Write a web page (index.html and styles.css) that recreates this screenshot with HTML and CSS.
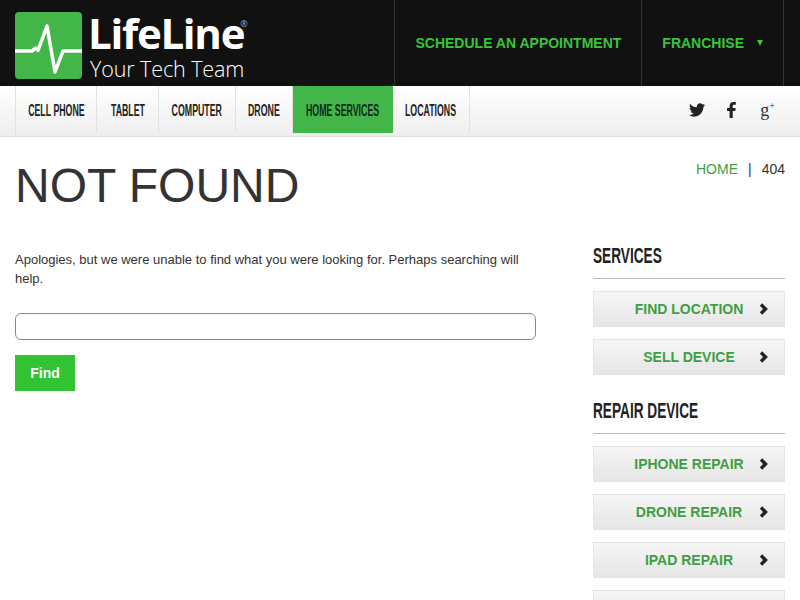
FILE: index.html
```html
<!DOCTYPE html>
<html lang="en">

<head>
    <meta charset="UTF-8">
    <meta name="viewport" content="width=device-width, initial-scale=1.0">
    <title>Not Found</title>
    <link rel="stylesheet" href="styles.css">
</head>

<body>
    <div class="page">
        <header class="top">
            <a class="logo" href="#">
                <svg class="logo-mark" width="67" height="67" viewBox="0 0 67 67">
                    <rect width="67" height="67" rx="4" fill="#43b649" />
                    <path d="M0 39 H17 L21 36 L23 38.500 L32 14 L40 60 L48 39 H67" fill="none" stroke="#fff" stroke-width="3.500" stroke-linejoin="round" />
                </svg>
                <span class="logo-text">
                    <span class="logo-name">LifeLine</span>
                    <span class="logo-tag">Your Tech Team</span>
                </span>
                <span class="logo-reg">®</span>
            </a>
            <nav class="top-links">
                <a href="#">SCHEDULE AN APPOINTMENT</a>
                <a href="#">FRANCHISE <span class="caret"></span></a>
            </nav>
        </header>

        <div class="menu">
            <nav class="menu-items">
                <a class="m-phone" href="#"><span>CELL PHONE</span></a>
                <a class="m-tablet" href="#"><span>TABLET</span></a>
                <a class="m-computer" href="#"><span>COMPUTER</span></a>
                <a class="m-drone" href="#"><span>DRONE</span></a>
                <a class="m-home active" href="#"><span>HOME SERVICES</span></a>
                <a class="m-locations" href="#"><span>LOCATIONS</span></a>
            </nav>
            <div class="social">
                <svg width="16" height="14" viewBox="0 0 24 20">
                    <path fill="#222" d="M24 2.400c-.9.400-1.800.700-2.800.800 1-.600 1.800-1.600 2.200-2.700-1 .600-2 1-3.100 1.200C19.300.700 18 0 16.600 0c-2.700 0-4.900 2.200-4.900 4.900 0 .400 0 .800.100 1.100C7.700 5.800 4.100 3.800 1.700.900 1.200 1.600 1 2.500 1 3.400c0 1.700.900 3.200 2.200 4.100-.800 0-1.600-.200-2.200-.600v.100c0 2.400 1.700 4.400 3.900 4.800-.400.100-.800.200-1.300.200-.300 0-.600 0-.900-.100.600 2 2.400 3.400 4.600 3.400-1.700 1.300-3.800 2.100-6.100 2.100-.400 0-.800 0-1.200-.100C2.200 19.200 4.800 20 7.500 20c9.100 0 14-7.500 14-14v-.600c1-.700 1.800-1.600 2.500-3z" />
                </svg>
                <svg class="fb" width="9" height="16" viewBox="0 0 9 16">
                    <path fill="#222" d="M2.600 16V9H0V6h2.600V4C2.600 1.400 4.200 0 6.500 0c1.100 0 2 .100 2.300.100v2.700H7.200c-1.300 0-1.500.600-1.500 1.500V6h3l-.400 3H5.700v7z" />
                </svg>
                <span class="gplus">g<sup>+</sup></span>
            </div>
        </div>

        <div class="title-row">
            <h1>NOT FOUND</h1>
            <div class="crumbs"><a href="#">HOME</a><span class="sep">|</span>404</div>
        </div>

        <div class="columns">
            <main class="content">
                <p>Apologies, but we were unable to find what you were looking for. Perhaps searching will help.</p>
                <form class="search">
                    <input type="text" />
                    <button type="button">Find</button>
                </form>
            </main>
            <aside class="side">
                <h3><span>SERVICES</span></h3>
                <a class="side-link" href="#">FIND LOCATION<svg class="chev" width="10" height="12" viewBox="0 0 10 12"><path d="M2 1.500 L6.500 6 L2 10.500" /></svg></a>
                <a class="side-link" href="#">SELL DEVICE<svg class="chev" width="10" height="12" viewBox="0 0 10 12"><path d="M2 1.500 L6.500 6 L2 10.500" /></svg></a>
                <h3><span>REPAIR DEVICE</span></h3>
                <a class="side-link" href="#">IPHONE REPAIR<svg class="chev" width="10" height="12" viewBox="0 0 10 12"><path d="M2 1.500 L6.500 6 L2 10.500" /></svg></a>
                <a class="side-link" href="#">DRONE REPAIR<svg class="chev" width="10" height="12" viewBox="0 0 10 12"><path d="M2 1.500 L6.500 6 L2 10.500" /></svg></a>
                <a class="side-link" href="#">IPAD REPAIR<svg class="chev" width="10" height="12" viewBox="0 0 10 12"><path d="M2 1.500 L6.500 6 L2 10.500" /></svg></a>
                <a class="side-link" href="#"></a>
            </aside>
        </div>
    </div>
</body>

</html>
```

FILE: styles.css
```css
* {
    box-sizing: border-box;
}

body {
    margin: 0;
    background-color: #fff;
    color: #333;
    font-family: "Liberation Sans", Arial, sans-serif;
}

a {
    text-decoration: none;
}

.page {
    height: 600px;
    overflow: hidden;
}

/* top bar */
.top {
    display: flex;
    justify-content: space-between;
    height: 86px;
    padding: 0 15px;
    background-color: #111;
}

.logo {
    display: flex;
    align-items: flex-start;
    gap: 6px;
    padding-top: 12px;
    color: #fff;
}

.logo-text {
    display: flex;
    flex-direction: column;
    font-family: "Open Sans", sans-serif;
}

.logo-name {
    margin-top: -4px;
    font-size: 42px;
    font-weight: 700;
    line-height: 50px;
    letter-spacing: -1.300px;
}

.logo-tag {
    margin-top: -3px;
    margin-left: 2px;
    font-size: 21.500px;
    font-weight: 300;
    line-height: 28px;
    letter-spacing: -0.1px;
}

.logo-reg {
    margin: 6px 0 0 -10px;
    color: #aaa;
    font-family: "Open Sans", sans-serif;
    font-size: 9px;
    line-height: 12px;
}

.top-links {
    display: flex;
    margin-right: 1px;
    border-right: 1px solid #333;
}

.top-links a {
    display: flex;
    align-items: center;
    padding: 0 20px;
    border-left: 1px solid #333;
    color: #3ac43a;
    font-size: 14px;
    font-weight: 700;
}

.caret {
    margin-left: 13px;
    border-top: 6px solid #3ac43a;
    border-left: 3.500px solid transparent;
    border-right: 3.500px solid transparent;
}

/* menu */
.menu {
    display: flex;
    justify-content: space-between;
    height: 51px;
    padding: 0 15px;
    background: linear-gradient(#fff, #eee);
    border-bottom: 1px solid #ddd;
}

.menu-items {
    display: flex;
    align-items: flex-start;
    border-left: 1px solid #e2e2e2;
}

.menu-items a {
    display: flex;
    justify-content: center;
    height: 47px;
    border-right: 1px solid #e2e2e2;
    color: #222;
    font-size: 16px;
    font-weight: 700;
    line-height: 50px;
}

/* no condensed face installed, so the text is narrowed */
.menu-items span {
    flex: none;
    white-space: nowrap;
    transform: scaleX(0.55);
}

.m-phone {
    width: 81px;
}

.m-tablet {
    width: 62px;
}

.m-computer {
    width: 77px;
}

.m-drone {
    width: 57px;
}

.m-home {
    width: 100px;
}

.m-locations {
    width: 77px;
}

.menu-items a.active {
    background-color: #43b649;
    border-right-color: #43b649;
    color: #12281a;
}

.social {
    display: flex;
    align-items: center;
    gap: 22px;
    padding-right: 10px;
    padding-bottom: 2px;
}

.fb {
    margin-right: 2px;
}

.gplus {
    color: #333;
    font-family: "Liberation Serif", serif;
    font-size: 18px;
    line-height: 18px;
}

.gplus sup {
    font-size: 10px;
    line-height: 0;
}

/* title */
.title-row {
    display: flex;
    justify-content: space-between;
    padding: 0 15px;
}

h1 {
    margin: 21px 0 0;
    color: #333;
    font-size: 48px;
    font-weight: 400;
    line-height: 55px;
}

.crumbs {
    margin-top: 24px;
    font-size: 14px;
    line-height: 16px;
}

.crumbs a {
    color: #3f9e44;
}

.sep {
    margin: 0 10px;
}

/* body columns */
.columns {
    display: flex;
    justify-content: space-between;
    padding: 0 15px;
}

.content {
    width: 521px;
    padding-top: 37px;
}

.content p {
    margin: 0 0 25px;
    font-size: 13px;
    line-height: 19px;
}

.search input {
    display: block;
    width: 100%;
    height: 27px;
    margin-bottom: 15px;
    border: 1px solid #888;
    border-radius: 6px;
    background-color: #fff;
}

.search button {
    width: 60px;
    height: 36px;
    border: 0;
    background-color: #33c233;
    color: #fff;
    font-family: "Liberation Sans", sans-serif;
    font-size: 14px;
    font-weight: 700;
}

.side {
    width: 192px;
    padding-top: 30px;
}

.side h3 {
    margin: 0 0 12px;
    padding-bottom: 10px;
    border-bottom: 1px solid #bbb;
    color: #222;
    font-size: 22px;
    font-weight: 700;
    line-height: 25px;
}

.side h3 span {
    display: inline-block;
    white-space: nowrap;
    transform: scaleX(0.62);
    transform-origin: left;
}

.side-link + h3 {
    margin-top: 23px;
}

.side-link {
    position: relative;
    display: block;
    height: 36px;
    margin-bottom: 12px;
    border: 1px solid #e4e4e4;
    background: linear-gradient(#f5f5f5, #e6e6e6);
    color: #3f9e44;
    font-size: 14px;
    font-weight: 700;
    line-height: 34px;
    text-align: center;
}

.chev {
    position: absolute;
    top: 11px;
    right: 15px;
    fill: none;
    stroke: #222;
    stroke-width: 3.400;
}
```
